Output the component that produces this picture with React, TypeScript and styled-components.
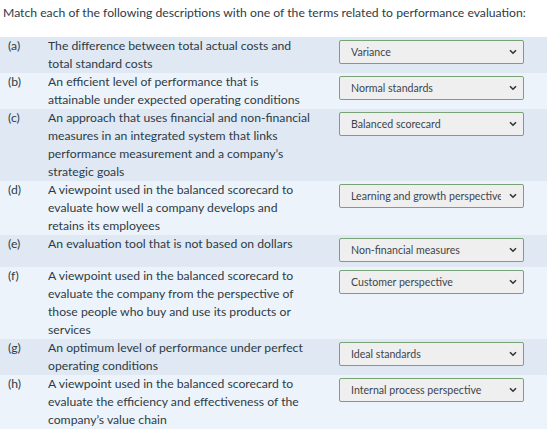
import styled, { createGlobalStyle } from 'styled-components';

const GlobalStyle = createGlobalStyle`
  body {
    margin: 0;
    background: #ffffff;
    font-family: Lato, "Open Sans", sans-serif;
    color: #2d3b45;
  }
`;

const Page = styled.div`
  width: 560px;
  padding-top: 4px;
`;

const Prompt = styled.p`
  margin: 0 0 15px 3px;
  font-size: 12.2px;
  line-height: 18px;
  white-space: nowrap;
`;

const Table = styled.div`
  width: 547px;
`;

const Row = styled.div<{ $shade: boolean }>`
  display: grid;
  grid-template-columns: 40px 1fr 185px;
  padding: 0 23px 0 8px;
  background: ${p => (p.$shade ? '#dfe8f3' : '#edf3fa')};
  font-size: 12.2px;
  line-height: 18px;
`;

const Letter = styled.div``;

const Description = styled.div``;

// each description line is kept as written in the quiz
const Line = styled.span`
  display: block;
  white-space: nowrap;
`;

const SelectWrap = styled.div`
  position: relative;
  margin: 3px 0 5px;
  height: 24px;
`;

const Select = styled.select`
  appearance: none;
  width: 100%;
  height: 24px;
  box-sizing: border-box;
  padding: 0 22px 0 11px;
  border: 1px solid #77a377;
  border-radius: 2px;
  background: #efefef;
  color: #3d454c;
  font-family: Lato, "Open Sans", sans-serif;
  font-size: 10.6px;
  outline: none;
`;

const Chevron = styled.svg`
  position: absolute;
  right: 7px;
  top: 9px;
  pointer-events: none;
`;

const terms = [
  'Variance',
  'Normal standards',
  'Balanced scorecard',
  'Learning and growth perspective',
  'Non-financial measures',
  'Customer perspective',
  'Ideal standards',
  'Internal process perspective',
];

const items = [
  {
    key: 'a',
    lines: ['The difference between total actual costs and', 'total standard costs'],
    answer: 'Variance',
  },
  {
    key: 'b',
    lines: ['An efficient level of performance that is', 'attainable under expected operating conditions'],
    answer: 'Normal standards',
  },
  {
    key: 'c',
    lines: [
      'An approach that uses financial and non-financial',
      'measures in an integrated system that links',
      'performance measurement and a company\u2019s',
      'strategic goals',
    ],
    answer: 'Balanced scorecard',
  },
  {
    key: 'd',
    lines: ['A viewpoint used in the balanced scorecard to', 'evaluate how well a company develops and', 'retains its employees'],
    answer: 'Learning and growth perspective',
  },
  {
    key: 'e',
    lines: ['An evaluation tool that is not based on dollars'],
    answer: 'Non-financial measures',
  },
  {
    key: 'f',
    lines: [
      'A viewpoint used in the balanced scorecard to',
      'evaluate the company from the perspective of',
      'those people who buy and use its products or',
      'services',
    ],
    answer: 'Customer perspective',
  },
  {
    key: 'g',
    lines: ['An optimum level of performance under perfect', 'operating conditions'],
    answer: 'Ideal standards',
  },
  {
    key: 'h',
    lines: ['A viewpoint used in the balanced scorecard to', 'evaluate the efficiency and effectiveness of the', 'company\u2019s value chain'],
    answer: 'Internal process perspective',
  },
];

const App = () => (
  <>
    <GlobalStyle />
    <Page>
      <Prompt>Match each of the following descriptions with one of the terms related to performance evaluation:</Prompt>
      <Table>
        {items.map((item, i) => (
          <Row key={item.key} $shade={i % 2 === 0}>
            <Letter>({item.key})</Letter>
            <Description>
              {item.lines.map(line => (
                <Line key={line}>{line}</Line>
              ))}
            </Description>
            <SelectWrap>
              <Select defaultValue={item.answer}>
                {terms.map(t => (
                  <option key={t} value={t}>{t}</option>
                ))}
              </Select>
              <Chevron width="8" height="6" viewBox="0 0 8 6">
                <path d="M1 1.2 L4 4.2 L7 1.2" fill="none" stroke="#333" strokeWidth="1.6" />
              </Chevron>
            </SelectWrap>
          </Row>
        ))}
      </Table>
    </Page>
  </>
);

export default App;
